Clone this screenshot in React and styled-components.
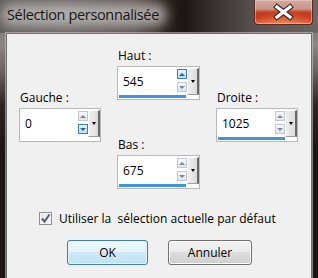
import React from 'react'
import styled, { createGlobalStyle } from 'styled-components'

const GlobalStyle = createGlobalStyle`
  html, body {
    margin: 0;
    padding: 0;
    background: #1a1412;
    overflow: hidden;
  }
  body {
    font-family: "Open Sans", "Noto Sans", sans-serif;
  }
`

function App() {
  return (
    <>
      <GlobalStyle />
      <Window>
        <TitleBar>
          <Title>Sélection personnalisée</Title>
          <CloseBtn>
            <svg width="57" height="23" viewBox="0 0 57 23">
              <path d="M22 6 L35 16 M35 6 L22 16" stroke="#3a2a28" strokeWidth="5.5" strokeLinecap="square" />
              <path d="M22 6 L35 16 M35 6 L22 16" stroke="#ffffff" strokeWidth="3.2" strokeLinecap="square" />
            </svg>
          </CloseBtn>
        </TitleBar>
        <Client>
          <SpinArea>
            <Side>
              <Spin label="Gauche :" value="0" fill={0} hot="down" />
            </Side>
            <Center>
              <Spin label="Haut :" value="545" fill={1} hot="up" />
              <Lower>
                <Spin label="Bas :" value="675" fill={1} />
              </Lower>
            </Center>
            <Side>
              <Spin label="Droite :" value="1025" fill={1} />
            </Side>
          </SpinArea>
          <CheckRow>
            <CheckBox>
              <svg width="11" height="11" viewBox="0 0 11 11">
                <path d="M2 5.5 L4.5 8.5 L9.5 1.5" fill="none" stroke="#4b5d86" strokeWidth="2" />
              </svg>
            </CheckBox>
            Utiliser la&nbsp; sélection actuelle par défaut
          </CheckRow>
          <Buttons>
            <Button $primary $w={81}>OK</Button>
            <Button $w={84}>Annuler</Button>
          </Buttons>
        </Client>
      </Window>
    </>
  )
}

function Spin({ label, value, fill, hot }) {
  return (
    <div>
      <FieldLabel>{label}</FieldLabel>
      <SpinBox>
        <SpinRow>
          <SpinValue>{value}</SpinValue>
          <Arrows>
            <ArrowBtn $hot={hot === 'up'}><Tri $up $hot={hot === 'up'} /></ArrowBtn>
            <ArrowBtn $hot={hot === 'down'}><Tri $hot={hot === 'down'} /></ArrowBtn>
          </Arrows>
          <DropBtn><DropTri /></DropBtn>
        </SpinRow>
        <Bar $fill={fill} />
      </SpinBox>
    </div>
  )
}

export default App

const Window = styled.div`
  width: 318px;
  height: 278px;
  display: flex;
  flex-direction: column;
  overflow: hidden;
  background: linear-gradient(180deg, #6a6563 0px, #8b8785 45px, #6a6462 70px, #2e2623 105px, #1b1513 150px);
`

const TitleBar = styled.div`
  height: 33px;
  flex: none;
  display: flex;
  align-items: flex-start;
  background: linear-gradient(90deg, #625c5a 0%, #6c6765 20%, #5a5350 42%, #2a211e 53%, #1d1614 58%, #3a3331 68%, #57514f 80%, #6a6664 100%);
`

const Title = styled.div`
  position: relative;
  margin: 6px 0 0 7px;
  font-size: 14.5px;
  line-height: 18px;
  letter-spacing: -0.35px;
  color: #161616;
  z-index: 0;

  &::before {
    content: '';
    position: absolute;
    left: -6px;
    right: -8px;
    top: -2px;
    bottom: -2px;
    border-radius: 12px;
    background: rgba(196, 192, 190, 0.8);
    filter: blur(6px);
    z-index: -1;
  }
`

const CloseBtn = styled.div`
  margin-left: auto;
  margin-right: 5px;
  width: 59px;
  height: 25px;
  box-sizing: border-box;
  border: 1px solid #5b2a22;
  border-top: none;
  border-radius: 0 0 4px 4px;
  background:
    radial-gradient(ellipse 60% 50% at 50% 100%, rgba(255, 150, 90, 0.7), rgba(255, 150, 90, 0) 100%),
    linear-gradient(180deg, #d2aaa1 0%, #c99688 38%, #c4573e 46%, #c4391e 56%, #cc3e1f 80%, #d8664a 100%);
  box-shadow: inset 0 0 0 1px rgba(255, 220, 210, 0.45);
  display: flex;
  align-items: center;
  justify-content: center;
`

const Client = styled.div`
  flex: 1;
  margin: 0 6px;
  background: #f0f0f0;
  border: 1px solid #6e6e6e;
  border-bottom: none;
  box-shadow: 0 0 0 1px rgba(215, 210, 208, 0.55);
  display: flex;
  flex-direction: column;
  font-size: 12px;
  color: #000;
`

const SpinArea = styled.div`
  display: flex;
  align-items: flex-start;
  gap: 16px;
  padding: 14px 0 0 12px;
`

const Side = styled.div`
  width: 82px;
  padding-top: 42px;
`

const Center = styled.div`
  width: 83px;
`

const Lower = styled.div`
  margin-top: 37px;
`

const FieldLabel = styled.div`
  line-height: 15px;
  margin: 0 0 3px 1px;
`

const SpinBox = styled.div`
  box-sizing: border-box;
  width: 100%;
  border: 1px solid #b9b9b9;
  background: #fff;
  padding: 1px 0 1px 1px;
`

const SpinRow = styled.div`
  display: flex;
  align-items: flex-start;
  height: 27px;
`

const SpinValue = styled.div`
  flex: 1;
  padding-left: 4px;
  line-height: 27px;
`

const Arrows = styled.div`
  width: 10px;
  margin-top: 1px;
  display: flex;
  flex-direction: column;
  gap: 3px;
`

const ArrowBtn = styled.div`
  box-sizing: border-box;
  width: 10px;
  height: 10px;
  border: 1px solid ${p => (p.$hot ? '#3c7fb1' : '#c3c8d0')};
  background: ${p => (p.$hot ? 'linear-gradient(#e3f2fc, #bcdff5)' : 'linear-gradient(#f7f8fa, #e3e6ea)')};
  display: flex;
  align-items: center;
  justify-content: center;
`

const Tri = styled.div`
  width: 0;
  height: 0;
  border-left: 3px solid transparent;
  border-right: 3px solid transparent;
  ${p => (p.$up ? 'border-bottom' : 'border-top')}: 3px solid ${p => (p.$hot ? '#2f5f9e' : '#7a84a8')};
`

const DropBtn = styled.div`
  box-sizing: border-box;
  width: 12px;
  height: 27px;
  border-top: 1px solid #fff;
  border-left: 1px solid #fff;
  border-right: 2px solid #6a6a6a;
  border-bottom: 1px solid #a0a0a0;
  background: linear-gradient(90deg, #eeeeee, #dcdcdc);
  display: flex;
  align-items: center;
  justify-content: center;
`

const DropTri = styled.div`
  width: 0;
  height: 0;
  border-left: 2.5px solid transparent;
  border-right: 2.5px solid transparent;
  border-top: 3px solid #000;
`

const Bar = styled.div`
  height: 3px;
  width: ${p => Math.round(p.$fill * 67)}px;
  background: #3f93e0;
`

const CheckRow = styled.div`
  display: flex;
  align-items: center;
  gap: 7px;
  margin-top: 22px;
  padding-left: 32px;
  line-height: 15px;
`

const CheckBox = styled.div`
  box-sizing: border-box;
  width: 13px;
  height: 13px;
  border: 1px solid #8f8f8f;
  background: linear-gradient(135deg, #e2e2e2, #fbfbfb);
  box-shadow: inset 0 0 0 1px #f4f4f4;
  display: flex;
  align-items: center;
  justify-content: center;
`

const Buttons = styled.div`
  display: flex;
  gap: 20px;
  margin-top: 14px;
  padding-left: 60px;
`

const Button = styled.div`
  box-sizing: border-box;
  width: ${p => p.$w}px;
  height: 25px;
  border-radius: 3px;
  border: 1px solid ${p => (p.$primary ? '#3c7fb1' : '#707070')};
  background: ${p => (p.$primary
    ? 'linear-gradient(#eef8fd 0%, #e1f2fb 50%, #cfe9f6 50%, #c0e1f2 100%)'
    : 'linear-gradient(#f2f2f2 0%, #ebebeb 50%, #dddddd 50%, #cfcfcf 100%)')};
  box-shadow: inset 0 0 0 1px ${p => (p.$primary ? '#e6f5fc' : '#fcfcfc')};
  display: flex;
  align-items: center;
  justify-content: center;
`
